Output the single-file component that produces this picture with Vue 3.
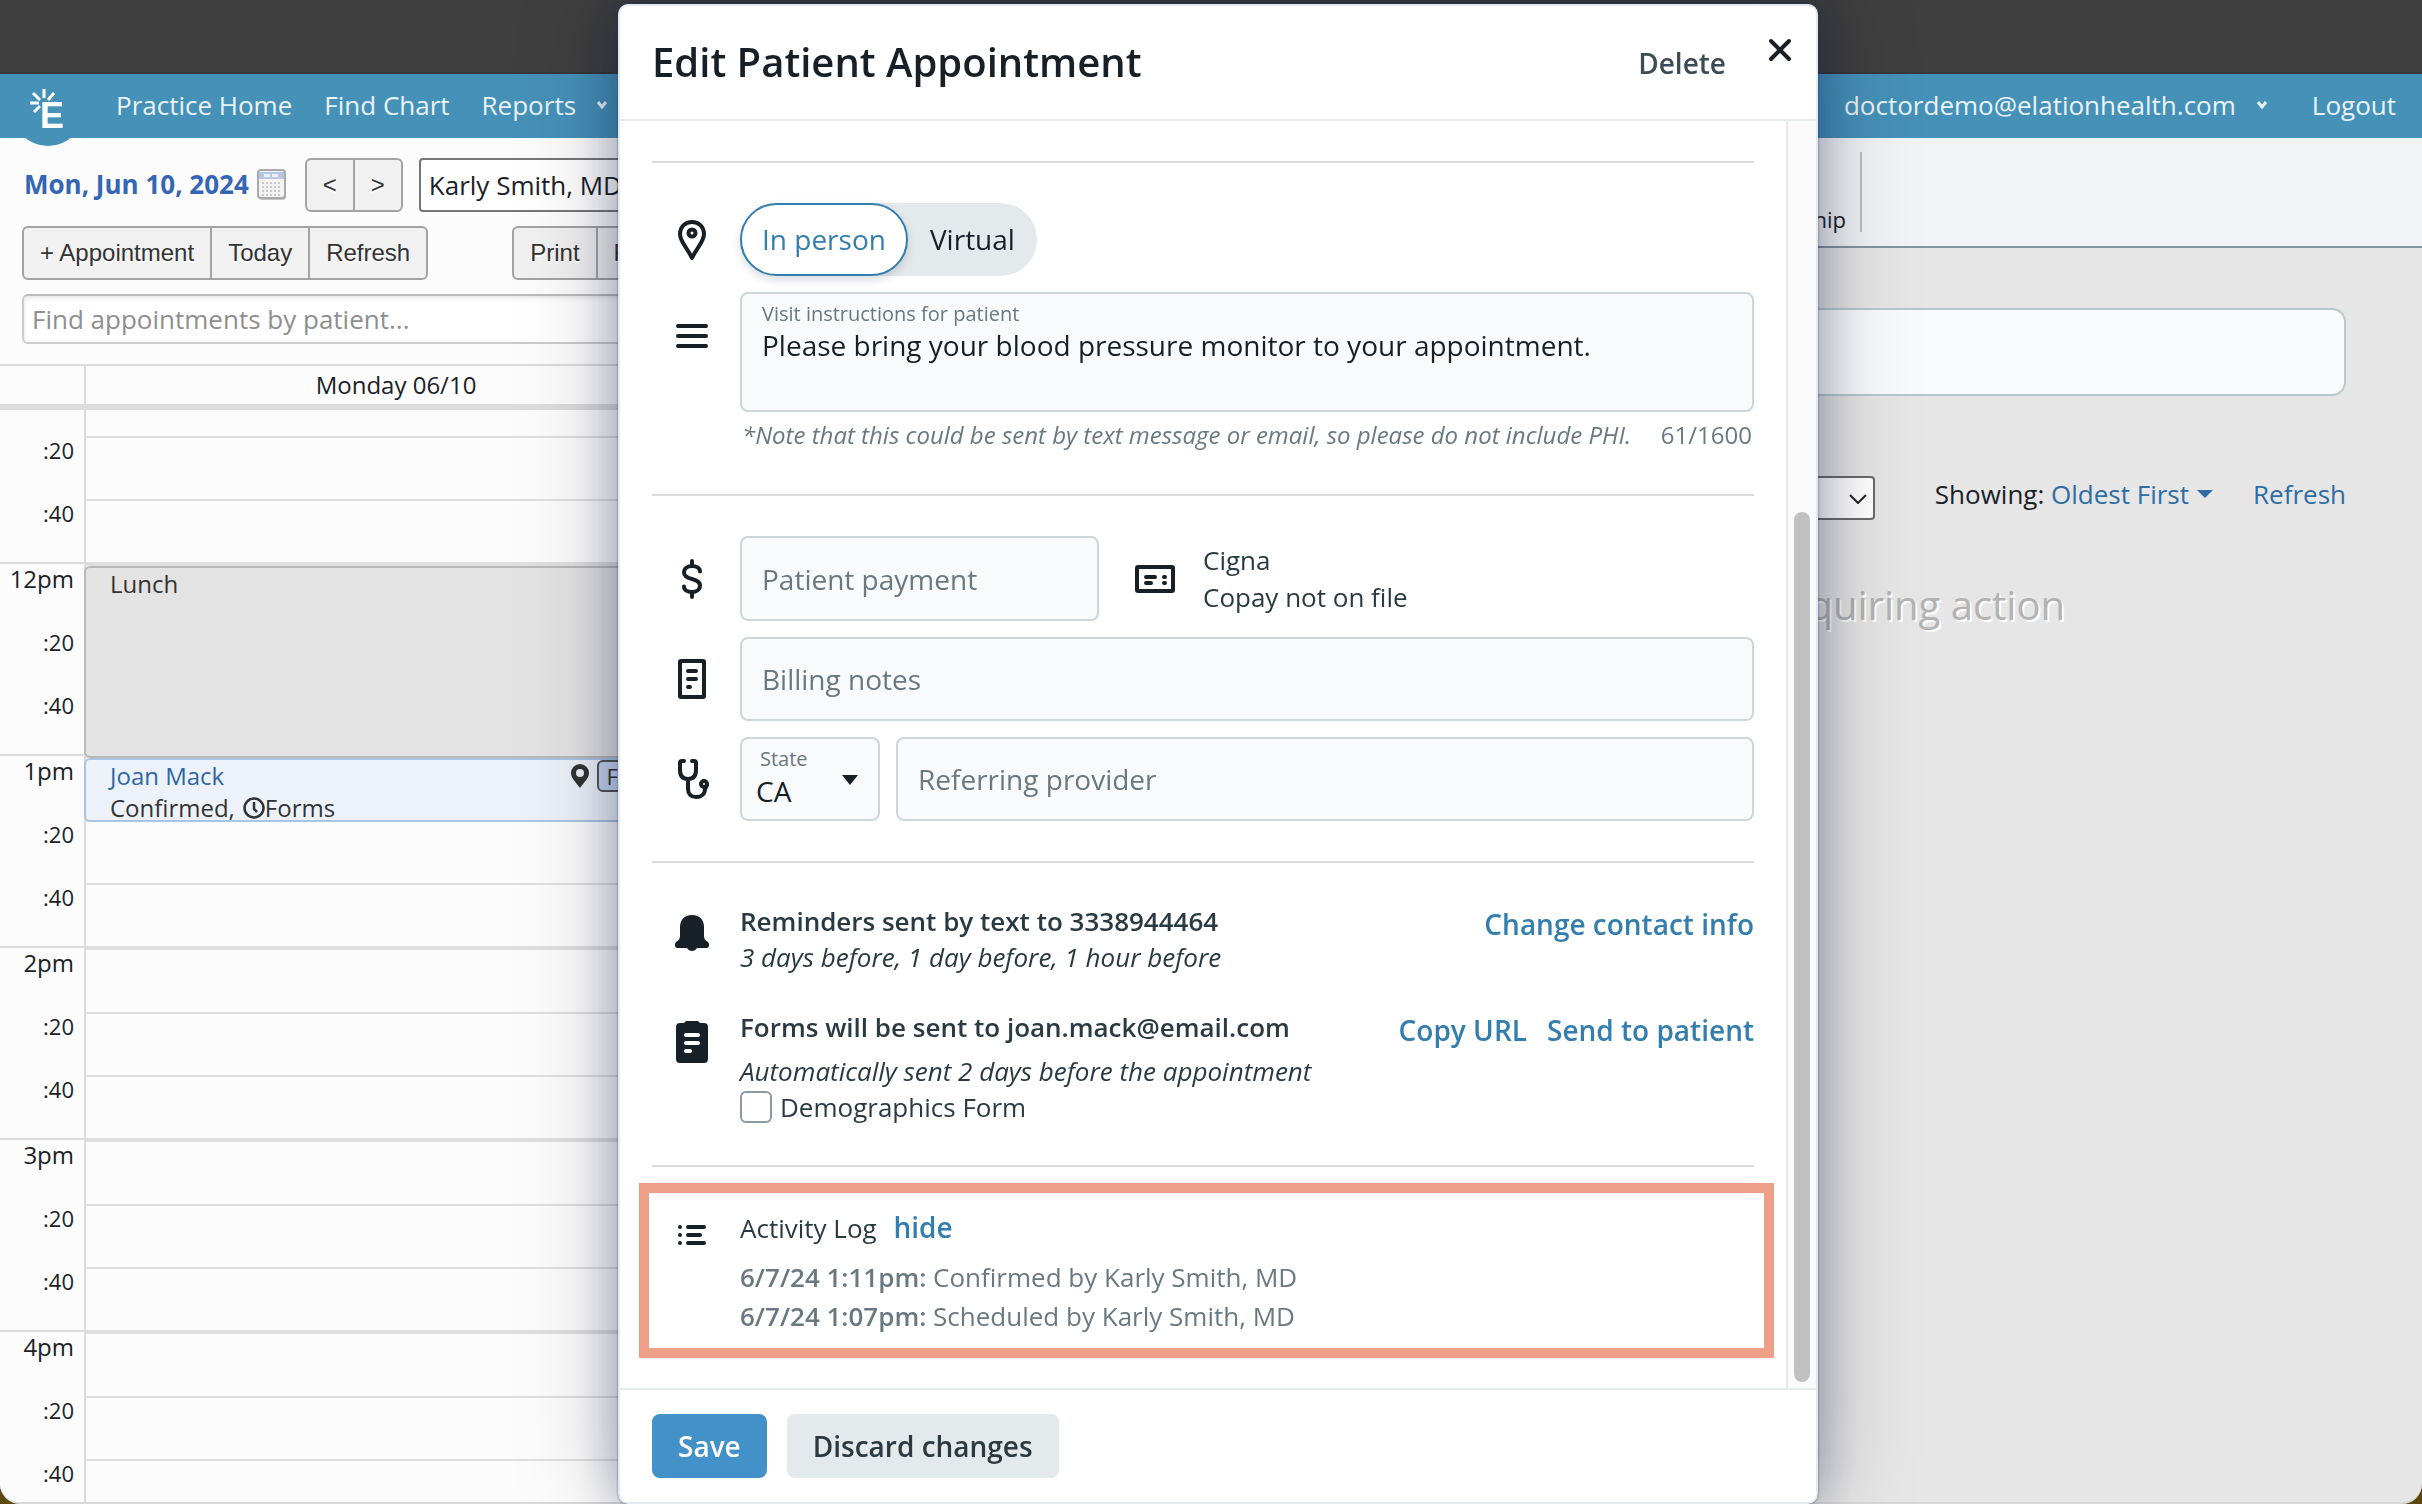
<template>
  <div class="page">
    <div class="top-strip"></div>
    <div class="window">
      <header class="navbar">
        <a href="#" class="logo" aria-label="Home">
          <svg width="72" height="72" viewBox="0 0 72 72">
            <circle cx="36" cy="36" r="36" fill="#4691b8" />
            <path d="M32 15v9M21 19l7 7M42 19l-6 7M18 29h9M22 38l6-6" stroke="#fff" stroke-width="3" />
            <text x="28" y="54" class="logo-letter">E</text>
          </svg>
        </a>
        <nav class="nav-links">
          <a href="#">Practice Home</a>
          <a href="#">Find Chart</a>
          <a href="#" class="nav-menu">
            Reports
            <svg width="12" height="8" viewBox="0 0 12 8"><path d="M2 1l4 5 4-5" fill="none" stroke="#e9f3f8" stroke-width="3" /></svg>
          </a>
        </nav>
        <nav class="nav-user">
          <a href="#" class="nav-menu">
            doctordemo@elationhealth.com
            <svg width="12" height="8" viewBox="0 0 12 8"><path d="M2 1l4 5 4-5" fill="none" stroke="#e9f3f8" stroke-width="3" /></svg>
          </a>
          <a href="#">Logout</a>
        </nav>
      </header>

      <div class="columns">
        <section class="calendar">
          <div class="toolbar">
            <div class="toolbar-row">
              <a href="#" class="date-link">Mon, Jun 10, 2024</a>
              <svg class="date-icon" width="30" height="32" viewBox="0 0 30 32">
                <rect x="2" y="3" width="27" height="28" rx="3" fill="#c4c4c4" />
                <rect x="1" y="1" width="27" height="28" rx="3" fill="#f3f3f3" stroke="#a9a9a9" stroke-width="2" />
                <path d="M2 3h25v7H2z" fill="#b5c7e2" />
                <path d="M7 5h6v3H7zM15 5h6v3h-6z" fill="#eef3fa" />
                <path d="M5 14h20M5 18h20M5 22h20M5 26h20" stroke="#c9c9c9" stroke-width="2" stroke-dasharray="2 2" />
              </svg>
              <div class="btn-group arrows">
                <button>&lt;</button>
                <button>&gt;</button>
              </div>
              <select class="provider-select" aria-label="Provider">
                <option>Karly Smith, MD</option>
              </select>
            </div>
            <div class="toolbar-row spread">
              <div class="btn-group">
                <button>+ Appointment</button>
                <button>Today</button>
                <button>Refresh</button>
              </div>
              <div class="btn-group">
                <button>Print</button>
                <button>Filter</button>
              </div>
            </div>
            <input type="text" class="find-input" placeholder="Find appointments by patient..." aria-label="Find appointments by patient" />
          </div>

          <div class="day-header">
            <div class="day-gutter"></div>
            <div class="day-title">Monday 06/10</div>
          </div>
          <div class="day-body">
            <div class="day-scroll">
              <div v-for="slot in slots" :key="slot.key" class="slot" :class="{ hour: slot.isHour }">
                <div class="slot-label">{{ slot.label }}</div>
                <div class="slot-cell"></div>
              </div>
              <div
                v-for="event in events"
                :key="event.title"
                class="event"
                :class="event.type"
                :style="{ top: eventTop(event) + 'px', height: event.minutes * PX_PER_MINUTE + 'px' }"
              >
                <div class="event-row">
                  <span class="event-title">{{ event.title }}</span>
                  <span v-if="event.tag" class="event-badges">
                    <svg width="18" height="24" viewBox="0 0 18 24">
                      <path d="M9 0a9 9 0 0 1 9 9c0 5-4 8-9 15C4 17 0 14 0 9a9 9 0 0 1 9-9zm0 5a4 4 0 1 0 0 8 4 4 0 0 0 0-8z" fill="#333" />
                    </svg>
                    <span class="event-tag">{{ event.tag }}</span>
                  </span>
                </div>
                <div v-if="event.status" class="event-row status">
                  {{ event.status }},
                  <svg width="22" height="22" viewBox="0 0 22 22">
                    <circle cx="11" cy="11" r="9.500" fill="none" stroke="#333" stroke-width="2.500" />
                    <path d="M11 5v7l3 3" fill="none" stroke="#333" stroke-width="2.500" />
                  </svg>Forms
                </div>
              </div>
            </div>
          </div>
        </section>

        <section class="inbox">
          <div class="subnav">
            <div class="subnav-item">Membership</div>
          </div>
          <div class="inbox-body">
            <div class="inbox-card"></div>
            <div class="inbox-filters">
              <div class="inbox-select">
                <select aria-label="Inbox filter"><option>All items</option></select>
                <svg width="18" height="10" viewBox="0 0 18 10"><path d="M1 1l8 8 8-8" fill="none" stroke="#222" stroke-width="2" /></svg>
              </div>
              <div class="showing">
                <span>Showing: <a href="#">Oldest First</a></span>
                <svg width="16" height="8" viewBox="0 0 16 8"><path d="M0 0h16L8 8z" fill="#2e6da4" /></svg>
              </div>
              <a href="#">Refresh</a>
            </div>
            <p class="inbox-empty">There are no items requiring action</p>
          </div>
        </section>
      </div>
    </div>

    <div class="overlay">
      <div class="modal" role="dialog" aria-labelledby="modal-title">
        <div class="modal-header">
          <h2 id="modal-title">Edit Patient Appointment</h2>
          <button class="delete-btn">Delete</button>
          <button class="close-btn" aria-label="Close">
            <svg width="24" height="24" viewBox="0 0 24 24"><path d="M3 3l18 18M21 3L3 21" stroke="#172026" stroke-width="4" stroke-linecap="round" /></svg>
          </button>
        </div>

        <div class="modal-body">
          <div class="modal-content">
            <div class="section">
              <div class="field-row">
                <div class="field-icon">
                  <svg width="28" height="40" viewBox="0 0 28 40" class="line-icon">
                    <path d="M14 2C7 2 2 7 2 14c0 8 7 13 12 24 5-11 12-16 12-24 0-7-5-12-12-12z" />
                    <circle cx="14" cy="13" r="3.500" />
                  </svg>
                </div>
                <div class="visit-toggle">
                  <label v-for="type in visitTypes" :key="type" :class="{ active: visitType === type }">
                    <input v-model="visitType" type="radio" name="visit-type" :value="type" />
                    {{ type }}
                  </label>
                </div>
              </div>
              <div class="field-row">
                <div class="field-icon notes-icon">
                  <svg width="32" height="24" viewBox="0 0 32 24" class="line-icon"><path d="M2 2h28M2 12h28M2 22h28" /></svg>
                </div>
                <div>
                  <div class="box textarea-box">
                    <label for="instructions">Visit instructions for patient</label>
                    <textarea id="instructions" v-model="instructions"></textarea>
                  </div>
                  <div class="note">
                    <em>*Note that this could be sent by text message or email, so please do not include PHI.</em>
                    <span>61/1600</span>
                  </div>
                </div>
              </div>
            </div>

            <div class="section">
              <div class="field-row">
                <div class="field-icon">
                  <svg width="20" height="40" viewBox="0 0 20 40" class="line-icon">
                    <path d="M18 12.500C18 9 14.500 7 10 7S2 9.500 2 13.500 6 19 10 20s8 2.500 8 6.500-3.500 6.500-8 6.500-8-2-8-5.500M10 2v5M10 33v5" />
                  </svg>
                </div>
                <div class="payment-row">
                  <input type="text" class="box payment" placeholder="Patient payment" aria-label="Patient payment" />
                  <svg width="40" height="28" viewBox="0 0 40 28" class="line-icon">
                    <rect x="2" y="2" width="36" height="24" rx="1" />
                    <path d="M11 12h9M11 18h5M29 12h1M29 18h1" />
                  </svg>
                  <div class="insurance">
                    <div>Cigna</div>
                    <div>Copay not on file</div>
                  </div>
                </div>
              </div>
              <div class="field-row">
                <div class="field-icon">
                  <svg width="28" height="40" viewBox="0 0 28 40" class="line-icon">
                    <rect x="2" y="2" width="24" height="36" rx="1" />
                    <path d="M10 12h8M10 20h8M10 28h2" />
                  </svg>
                </div>
                <input type="text" class="box" placeholder="Billing notes" aria-label="Billing notes" />
              </div>
              <div class="field-row">
                <div class="field-icon">
                  <svg width="28" height="40" viewBox="0 0 28 40" class="line-icon stethoscope">
                    <path d="M6 2H4a2 2 0 0 0-2 2v7c0 6 3 9 8 9s8-3 8-9V4a2 2 0 0 0-2-2h-2M10 20v10c0 5 3 8 8 8s9-3 9-8l2-4" />
                    <circle cx="26" cy="25" r="3" />
                  </svg>
                </div>
                <div class="referral-row">
                  <div class="box state-box">
                    <label for="state">State</label>
                    <select id="state"><option>CA</option></select>
                    <svg width="16" height="10" viewBox="0 0 16 10"><path d="M0 0h16L8 10z" fill="#172026" /></svg>
                  </div>
                  <input type="text" class="box" placeholder="Referring provider" aria-label="Referring provider" />
                </div>
              </div>
            </div>

            <div class="section notices">
              <div class="field-row">
                <div class="field-icon top">
                  <svg width="34" height="36" viewBox="0 0 34 36">
                    <path d="M17 0c8 0 12 5 12 12v8c0 4 1 5 4 7 2 2 1 6-1 6H22c-1 2-3 3-5 3s-4-1-5-3H2c-2 0-3-4-1-6 3-2 4-3 4-7v-8C5 5 9 0 17 0z" fill="#172026" />
                  </svg>
                </div>
                <div class="notice">
                  <div>
                    <strong>Reminders sent by text to 3338944464</strong>
                    <em>3 days before, 1 day before, 1 hour before</em>
                  </div>
                  <div class="notice-actions">
                    <a href="#">Change contact info</a>
                  </div>
                </div>
              </div>
              <div class="field-row">
                <div class="field-icon top">
                  <svg width="32" height="42" viewBox="0 0 32 42">
                    <path d="M4 2h4l2-2h12l2 2h4a4 4 0 0 1 4 4v32a4 4 0 0 1-4 4H4a4 4 0 0 1-4-4V6a4 4 0 0 1 4-4z" fill="#172026" />
                    <path d="M10 14h12M10 22h12M10 30h4" stroke="#fff" stroke-width="4" stroke-linecap="round" />
                  </svg>
                </div>
                <div class="notice">
                  <div>
                    <strong>Forms will be sent to joan.mack@email.com</strong>
                    <em class="spaced">Automatically sent 2 days before the appointment</em>
                    <label class="check">
                      <input type="checkbox" />
                      Demographics Form
                    </label>
                  </div>
                  <div class="notice-actions">
                    <a href="#">Copy URL</a>
                    <a href="#">Send to patient</a>
                  </div>
                </div>
              </div>
            </div>

            <div class="section activity-section">
              <div class="activity">
                <div class="field-row">
                  <div class="field-icon list-icon">
                    <svg width="28" height="20" viewBox="0 0 28 20" class="line-icon">
                      <path d="M10 2h16M10 10h12M10 18h16" />
                      <path d="M2 2h0M2 10h0M2 18h0" />
                    </svg>
                  </div>
                  <div>
                    <div class="activity-title">
                      Activity Log
                      <a href="#">hide</a>
                    </div>
                    <div v-for="entry in log" :key="entry.time" class="activity-entry">
                      <b>{{ entry.time }}:</b> {{ entry.text }}
                    </div>
                  </div>
                </div>
              </div>
            </div>
          </div>
          <div class="scrollbar"><div class="scroll-thumb"></div></div>
        </div>

        <div class="modal-footer">
          <button class="btn-primary">Save</button>
          <button class="btn-secondary">Discard changes</button>
        </div>
      </div>
    </div>
  </div>
</template>

<script setup>
import { ref } from 'vue'

const PX_PER_MINUTE = 3.2
const FIRST_HOUR = 11

const visitTypes = ['In person', 'Virtual']
const visitType = ref('In person')
const instructions = ref('Please bring your blood pressure monitor to your appointment.')

// the first hour is scrolled under the day header, so it has no label
const hours = ['', '12pm', '1pm', '2pm', '3pm', '4pm']
const slots = hours.flatMap((hour) =>
  [hour, ':20', ':40'].map((label, i) => ({
    key: hour + '-' + i,
    label,
    isHour: i === 0
  }))
)

const events = [
  { title: 'Lunch', type: 'blocked', start: 12, minutes: 60 },
  { title: 'Joan Mack', type: 'visit', start: 13, minutes: 20, status: 'Confirmed', tag: 'F/U' }
]

// 4px keeps the event clear of the hour line
const eventTop = (event) => (event.start - FIRST_HOUR) * 60 * PX_PER_MINUTE + 4

const log = [
  { time: '6/7/24 1:11pm', text: 'Confirmed by Karly Smith, MD' },
  { time: '6/7/24 1:07pm', text: 'Scheduled by Karly Smith, MD' }
]
</script>

<style>
body {
  background: #3f3f3f;
}
</style>

<style scoped>
* {
  box-sizing: border-box;
}

.page {
  display: flex;
  flex-direction: column;
  height: 100vh;
  overflow: hidden;
  background: #5c470f;
  font-family: "Open Sans", "Noto Sans", sans-serif;
  font-size: 26px;
  color: #1b2126;
}

a {
  color: inherit;
  text-decoration: none;
}

button,
input,
select,
textarea {
  font: inherit;
  color: inherit;
  margin: 0;
}

svg {
  flex-shrink: 0;
}

.top-strip {
  height: 74px;
  flex-shrink: 0;
  background: #3f3f3f;
  border-bottom: 2px solid #383838;
}

.window {
  flex: 1;
  min-height: 0;
  display: flex;
  flex-direction: column;
  overflow: hidden;
  background: #e6e6e6;
  border-bottom: 2px solid #d9d9d9;
  border-radius: 0 0 20px 20px;
}

/* Navbar */
.navbar {
  display: flex;
  align-items: flex-start;
  height: 64px;
  flex-shrink: 0;
  padding: 0 26px 0 12px;
  background: #4691b8;
  color: #e9f3f8;
  line-height: 62px;
}

.logo {
  position: relative;
  z-index: 1;
  height: 72px;
}

.logo svg {
  display: block;
}

.logo-letter {
  font-family: "Liberation Sans", Arial, sans-serif;
  font-size: 36px;
  font-weight: 700;
  fill: #fff;
}

.nav-links,
.nav-user {
  display: flex;
  gap: 32px;
}

.nav-links {
  margin-left: 32px;
}

.nav-user {
  gap: 44px;
  margin-left: auto;
}

.nav-menu {
  display: flex;
  align-items: center;
  gap: 20px;
}

.columns {
  flex: 1;
  min-height: 0;
  display: flex;
}

/* Calendar */
.calendar {
  width: 706px;
  flex-shrink: 0;
  display: flex;
  flex-direction: column;
  background: #fcfcfc;
}

.toolbar {
  display: flex;
  flex-direction: column;
  gap: 14px;
  padding: 20px 22px;
}

.toolbar-row {
  display: flex;
  align-items: center;
  height: 54px;
}

.date-link {
  margin-left: 2px;
  padding-bottom: 2px;
  font-weight: 700;
  color: #3566b5;
  white-space: nowrap;
}

.date-icon {
  margin-left: 8px;
}

.btn-group {
  display: flex;
  flex-shrink: 0;
  height: 54px;
  border: 2px solid #a3a3a3;
  border-radius: 6px;
  background: #f1f1f1;
  overflow: hidden;
}

.btn-group button {
  padding: 0 16px;
  border: none;
  background: none;
  font-family: "Liberation Sans", Arial, sans-serif;
  font-size: 24px;
  color: #333;
  text-shadow: 0 2px 0 #fff;
  white-space: nowrap;
}

.btn-group button + button {
  border-left: 2px solid #a3a3a3;
}

.arrows {
  margin: 0 16px 0 18px;
}

.provider-select {
  flex: 1;
  min-width: 0;
  height: 54px;
  padding: 0 8px;
  border: 2px solid #767676;
  border-radius: 4px;
  background: #fff;
  appearance: none;
}

.spread {
  gap: 84px;
}

.find-input {
  height: 50px;
  padding: 0 8px;
  border: 2px solid #ccc;
  border-top-color: #bbb;
  border-radius: 6px;
  background: #fff;
  box-shadow: inset 0 2px 4px rgba(0, 0, 0, 0.1);
}

.find-input::placeholder {
  color: #8e8e8e;
}

.day-header {
  display: flex;
  height: 46px;
  flex-shrink: 0;
  border-top: 2px solid #dcdcdc;
  border-bottom: 6px solid #dcdcdc;
}

.day-gutter {
  width: 86px;
  border-right: 2px solid #dcdcdc;
}

.day-title {
  flex: 1;
  text-align: center;
  font-size: 24px;
  line-height: 38px;
}

.day-body {
  flex: 1;
  min-height: 0;
  overflow: hidden;
}

.day-scroll {
  position: relative;
  margin-top: -40px;
}

.slot {
  display: flex;
  height: 63px;
}

.slot.hour {
  height: 66px;
}

.slot-label {
  width: 86px;
  padding-right: 10px;
  border-right: 2px solid #dcdcdc;
  text-align: right;
  font-size: 22px;
  line-height: 28px;
}

.slot.hour .slot-label {
  border-top: 2px solid #dcdcdc;
  font-size: 24px;
  line-height: 30px;
}

.slot-cell {
  flex: 1;
  border-top: 2px solid #dfdfdf;
}

.slot.hour .slot-cell {
  border-top-width: 4px;
}

.event {
  position: absolute;
  left: 84px;
  right: 0;
  padding-left: 24px;
  border: 2px solid #b9b9b9;
  border-radius: 6px;
  background: #e3e3e3;
  font-size: 24px;
  line-height: 32px;
  color: #333;
}

.event.visit {
  border-color: #a9c5e4;
  background: #edf2fa;
}

.event.visit .event-title {
  color: #2e67a4;
}

.event-row {
  display: flex;
  align-items: center;
  height: 32px;
}

.status svg {
  margin-left: 8px;
}

.event-badges {
  display: flex;
  align-items: center;
  gap: 8px;
  margin-left: auto;
  margin-right: 52px;
}

.event-tag {
  height: 32px;
  padding: 0 8px;
  border: 2px solid #555;
  border-radius: 6px;
  background: #c9d8f0;
  font-size: 22px;
  line-height: 28px;
}

/* Inbox */
.inbox {
  flex: 1;
  min-width: 0;
  display: flex;
  flex-direction: column;
}

.subnav {
  display: flex;
  align-items: center;
  justify-content: flex-end;
  height: 110px;
  flex-shrink: 0;
  padding-right: 560px;
  background: #f2f3f5;
  border-bottom: 2px solid #8296a2;
}

.subnav-item {
  display: flex;
  align-items: flex-end;
  height: 80px;
  padding-right: 14px;
  border-right: 2px solid #b4c0c5;
  font-size: 22px;
  line-height: 26px;
}

.inbox-body {
  padding: 60px 76px 0 60px;
}

.inbox-card {
  height: 88px;
  border: 2px solid #bcc7cc;
  border-radius: 14px;
  background: #f9fafc;
}

.inbox-filters {
  display: flex;
  justify-content: flex-end;
  align-items: flex-start;
  height: 44px;
  margin-top: 80px;
  line-height: 36px;
}

.inbox-filters a {
  color: #2e6da4;
}

.inbox-select {
  position: relative;
}

.inbox-select select {
  display: block;
  width: 320px;
  height: 44px;
  padding: 0 8px;
  border: 2px solid #6b6b6b;
  border-radius: 4px;
  background: #fff;
  appearance: none;
}

.inbox-select svg {
  position: absolute;
  right: 8px;
  top: 18px;
}

.showing {
  display: flex;
  align-items: center;
  gap: 8px;
  margin: 0 40px 0 60px;
}

.inbox-empty {
  margin: 58px 281px 0 0;
  text-align: right;
  font-size: 40px;
  line-height: 54px;
  color: #b3b3b3;
  text-shadow: 2px 2px 0 #fff;
}

/* Modal */
.overlay {
  position: fixed;
  inset: 0;
  display: flex;
  justify-content: center;
  padding: 4px 0 0 14px;
}

.modal {
  display: flex;
  flex-direction: column;
  width: 1200px;
  background: #fff;
  border: 2px solid #e5eaed;
  border-radius: 10px;
  box-shadow: 0 0 2px rgba(20, 50, 90, 0.8), 0 0 48px rgba(0, 20, 80, 0.3), 0 0 100px rgba(0, 10, 30, 0.25);
  color: #293a42;
  overflow: hidden;
}

.modal-header {
  display: flex;
  align-items: center;
  height: 115px;
  flex-shrink: 0;
  padding: 0 24px 0 32px;
  border-bottom: 2px solid #e5eaed;
}

.modal-header h2 {
  flex: 1;
  margin: 0;
  padding-bottom: 2px;
  font-size: 40px;
  font-weight: 600;
  color: #172026;
}

.delete-btn,
.close-btn {
  padding: 0;
  border: none;
  background: none;
}

.delete-btn {
  margin-right: 42px;
  font-size: 28px;
  font-weight: 600;
  color: #3c4c55;
}

.close-btn {
  align-self: flex-start;
  padding-top: 32px;
}

.close-btn svg {
  display: block;
}

.modal-body {
  flex: 1;
  min-height: 0;
  display: flex;
}

.modal-content {
  flex: 1;
  padding: 40px 32px 0;
  overflow: hidden;
}

.scrollbar {
  width: 30px;
  display: flex;
  flex-direction: column;
  justify-content: flex-end;
  align-items: center;
  padding-bottom: 6px;
  background: #fafafa;
  border-left: 2px solid #e8e8e8;
}

.scroll-thumb {
  width: 16px;
  height: 69%;
  border-radius: 8px;
  background: #c1c1c1;
}

.section {
  display: flex;
  flex-direction: column;
  gap: 16px;
  padding: 40px 0;
  border-top: 2px solid #d9dbdc;
}

.section.notices {
  gap: 34px;
}

.section.activity-section {
  padding: 16px 0 0;
}

.field-row {
  display: grid;
  grid-template-columns: 80px minmax(0, 1fr);
  column-gap: 8px;
}

.field-icon {
  display: flex;
  justify-content: center;
  align-items: center;
}

.field-icon.top,
.field-icon.notes-icon,
.field-icon.list-icon {
  align-items: flex-start;
  padding-top: 12px;
}

.field-icon.notes-icon {
  padding-top: 32px;
}

.field-icon.list-icon {
  padding-top: 16px;
}

.line-icon {
  fill: none;
  stroke: #172026;
  stroke-width: 4;
  stroke-linecap: round;
  stroke-linejoin: round;
}

/* the chest piece hangs out to the right of the tube */
.stethoscope {
  overflow: visible;
}

.visit-toggle {
  display: flex;
  justify-self: start;
  height: 73px;
  border-radius: 37px;
  background: #e4e9eb;
}

.visit-toggle label {
  position: relative;
  display: flex;
  align-items: center;
  padding: 0 22px 2px;
  border-radius: 37px;
  font-size: 28px;
  color: #172026;
}

.visit-toggle label.active {
  padding: 0 20px 2px;
  border: 2px solid #337eae;
  background: #fff;
  color: #337eae;
  box-shadow: 0 4px 10px rgba(0, 20, 60, 0.15);
}

.visit-toggle input {
  position: absolute;
  opacity: 0;
}

.box {
  width: 100%;
  height: 84px;
  padding: 0 20px;
  border: 2px solid #cfd6d9;
  border-radius: 8px;
  background: #f9fafc;
  font-size: 28px;
  color: #172026;
}

.box::placeholder {
  color: #697881;
  opacity: 1;
}

.box label {
  display: block;
  font-size: 20px;
  line-height: 24px;
  color: #697881;
}

.textarea-box {
  height: 120px;
  padding-top: 8px;
}

.textarea-box textarea {
  display: block;
  width: 100%;
  height: 76px;
  padding: 0;
  border: none;
  background: none;
  line-height: 38px;
  resize: none;
}

.note {
  display: flex;
  justify-content: space-between;
  padding: 6px 2px 2px;
  font-size: 24px;
  line-height: 34px;
  color: #697881;
}

.payment-row {
  display: flex;
  align-items: center;
}

.box.payment {
  width: 359px;
  height: 85px;
  margin-right: 36px;
}

.insurance {
  margin-left: 28px;
  line-height: 37px;
}

.referral-row {
  display: flex;
  gap: 16px;
}

.state-box {
  position: relative;
  width: 140px;
  flex-shrink: 0;
  padding: 8px 14px 0;
}

.state-box label {
  padding-left: 4px;
}

.state-box select {
  display: block;
  width: 100%;
  height: 40px;
  padding: 0;
  border: none;
  background: none;
  appearance: none;
}

.state-box svg {
  position: absolute;
  right: 20px;
  top: 36px;
}

.notice {
  display: flex;
  justify-content: space-between;
  line-height: 36px;
}

.notice strong,
.notice em {
  display: block;
  font-weight: 600;
}

.notice em {
  font-weight: 400;
}

.notice em.spaced {
  margin-top: 8px;
}

.notice-actions {
  display: flex;
  gap: 20px;
  font-size: 28px;
  font-weight: 600;
  line-height: 42px;
  color: #337eae;
}

.check {
  display: flex;
  align-items: center;
  gap: 8px;
}

.check input {
  width: 32px;
  height: 32px;
  border: 2px solid #8a9aa5;
  border-radius: 6px;
  background: #fff;
  appearance: none;
}

/* Activity log */
.activity {
  margin: 0 -20px 0 -13px;
  padding: 16px 10px 12px 3px;
  border: 10px solid #ee9f88;
}

.activity-title {
  margin-bottom: 12px;
  line-height: 36px;
}

.activity-title a {
  margin-left: 10px;
  font-size: 28px;
  font-weight: 600;
  color: #337eae;
}

.activity-entry {
  line-height: 39px;
  color: #697881;
}

.activity-entry b {
  font-weight: 600;
}

.modal-footer {
  display: flex;
  gap: 20px;
  height: 114px;
  flex-shrink: 0;
  padding: 24px 32px;
  border-top: 2px solid #e5eaed;
}

.btn-primary,
.btn-secondary {
  height: 64px;
  padding: 0 26px;
  border: none;
  border-radius: 8px;
  font-size: 28px;
  font-weight: 600;
}

.btn-primary {
  background: #4292c9;
  color: #fff;
}

.btn-secondary {
  background: #e4e9eb;
  color: #2b3a42;
}
</style>
